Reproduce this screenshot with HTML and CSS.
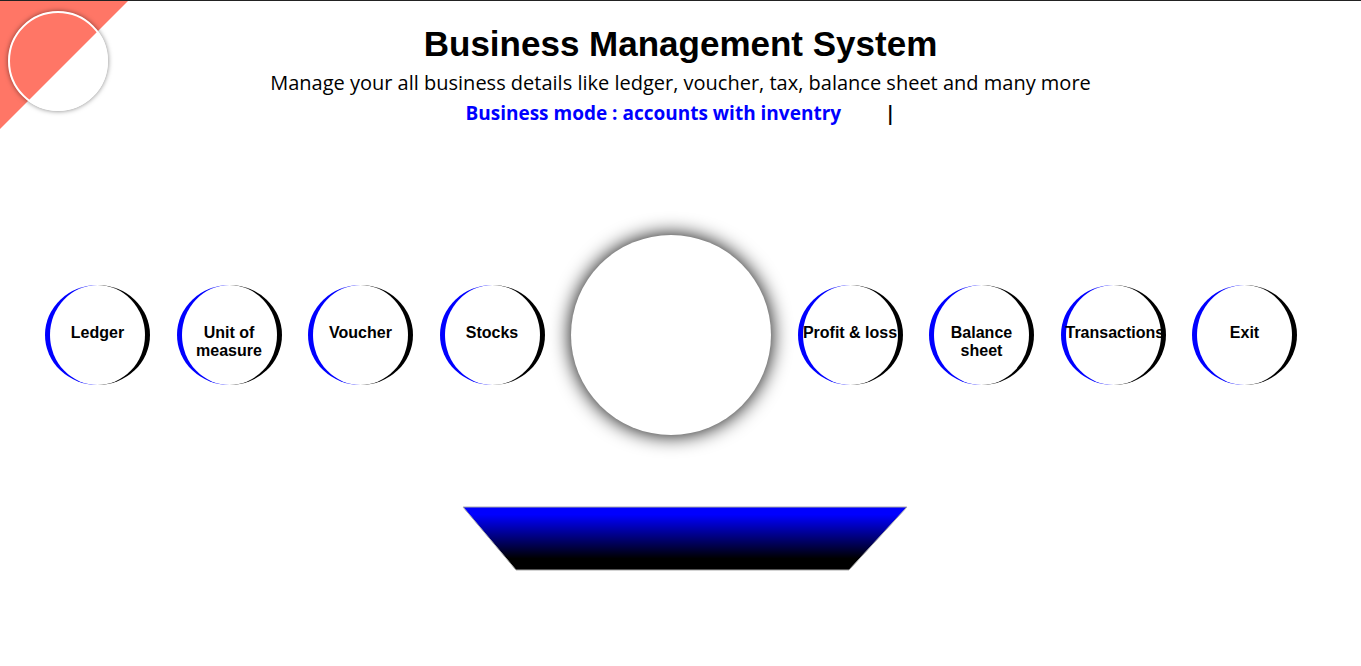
FILE: index.html
```html
<!DOCTYPE html>
<html lang="en">
<head>
<meta charset="utf-8">
<title>Business Management System</title>
<link rel="stylesheet" href="styles.css">
</head>
<body>
<div class="corner"><div class="corner-fill"></div><div class="logo-ring"></div></div>
<header class="header">
  <h1 class="title">Business Management System</h1>
  <p class="subtitle">Manage your all business details like ledger, voucher, tax, balance sheet and many more</p>
  <p class="mode"><span class="mode-text">Business mode : accounts with inventry</span><span class="caret">|</span></p>
</header>
<main>
  <nav class="menu">
    <button class="item" type="button">Ledger</button>
    <button class="item" type="button">Unit of measure</button>
    <button class="item" type="button">Voucher</button>
    <button class="item" type="button">Stocks</button>
    <div class="hub"></div>
    <button class="item" type="button">Profit &amp; loss</button>
    <button class="item" type="button">Balance sheet</button>
    <button class="item" type="button">Transactions</button>
    <button class="item" type="button">Exit</button>
  </nav>
  <div class="stand">
    <svg width="446" height="65" viewBox="0 0 446 65" aria-hidden="true">
      <defs>
        <linearGradient id="fade" x1="0" y1="0" x2="0" y2="1">
          <stop offset="0.12" stop-color="#0000ff"/>
          <stop offset="0.82" stop-color="#000000"/>
        </linearGradient>
      </defs>
      <path d="M1 1H445L387 64H54Z" fill="url(#fade)" stroke="#aaa" stroke-width="1"/>
    </svg>
  </div>
</main>
</body>
</html>
```
FILE: styles.css
```css
* { box-sizing: border-box; }
body {
  margin: 0;
  border-top: 1px solid #222;
  background: #fff;
  color: #000;
  font-family: Arial, "Liberation Sans", sans-serif;
}
.corner { position: absolute; top: 1px; left: 0; width: 128px; height: 128px; }
.corner-fill {
  position: absolute;
  inset: 0;
  background: #ff7666;
  clip-path: polygon(0 0, 100% 0, 0 100%);
}
.logo-ring {
  position: absolute;
  top: 10px;
  left: 8px;
  width: 100px;
  height: 100px;
  border: 2px solid #fff;
  border-radius: 50%;
  box-shadow: 0 0 5px rgba(0, 0, 0, 0.5);
}
.header { padding-top: 22px; text-align: center; }
.title { margin: 0; font-size: 35px; line-height: 42px; }
.subtitle, .mode {
  margin: 0;
  font-family: "Comic Sans MS", "Open Sans", sans-serif;
  font-size: 20px;
  line-height: 30px;
}
.subtitle { margin-top: 3px; }
.mode { display: flex; justify-content: center; gap: 44px; font-size: 19px; font-weight: bold; }
.mode-text { color: #00f; }
.menu {
  display: flex;
  align-items: center;
  justify-content: space-between;
  margin-top: 107px;
  padding: 0 64px 0 45px;
}
.item {
  display: flex;
  align-items: flex-start;
  flex: none;
  width: 105px;
  height: 100px;
  padding: 39px 0 0;
  border: solid;
  border-width: 0 5px;
  border-color: #000 #000 #000 #00f;
  border-radius: 50%;
  background: none;
  color: #000;
  font: bold 16px/18px Arial, "Liberation Sans", sans-serif;
  text-align: center;
  justify-content: safe center;
  cursor: pointer;
}
.hub {
  flex: none;
  width: 200px;
  height: 200px;
  border-radius: 50%;
  background: #fff;
  box-shadow: 0 0 20px #000;
}
.stand { display: flex; justify-content: center; margin-top: 71px; padding-left: 9px; }
```
